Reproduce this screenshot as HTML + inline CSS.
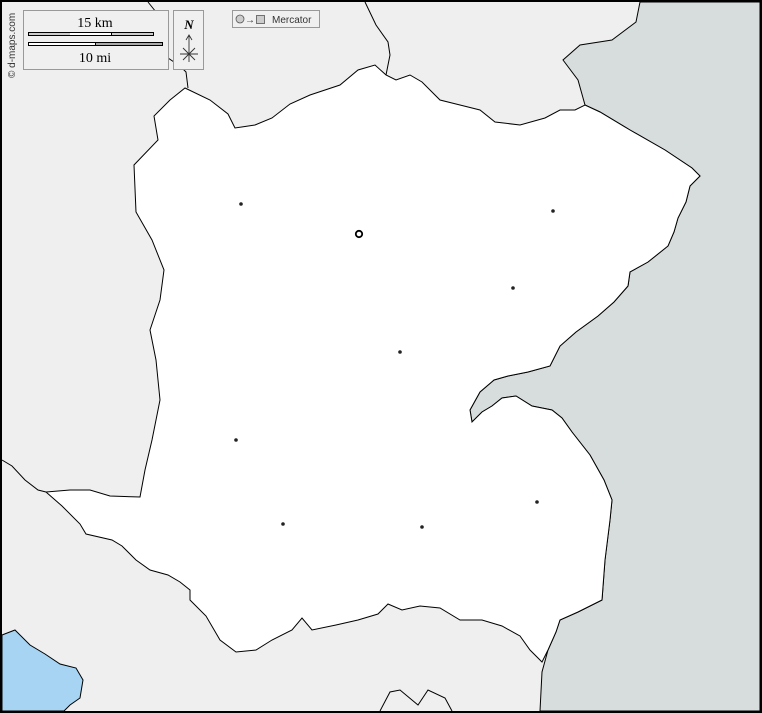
<!DOCTYPE html>
<html><head><meta charset="utf-8"><style>
html,body{margin:0;padding:0;background:#000}
svg{display:block}
</style></head><body>
<svg width="762" height="713" viewBox="0 0 762 713" xmlns="http://www.w3.org/2000/svg">
<rect x="0" y="0" width="762" height="713" fill="#000"/>
<rect x="2" y="2" width="758" height="709" fill="#efefef"/>
<path d="M640,2 L636,22 L612,40 L580,45 L563,60 L578,80 L585,105 L600,112 L630,130 L665,150 L692,168 L700,176 L690,186 L686,202 L678,218 L674,232 L668,246 L648,262 L630,272 L628,286 L614,302 L598,316 L576,332 L560,346 L550,366 L528,372 L508,376 L494,380 L480,392 L470,410 L472,422 L482,412 L492,406 L502,398 L516,396 L532,406 L552,410 L562,418 L572,432 L590,455 L604,480 L612,500 L610,520 L605,560 L602,600 L578,612 L560,620 L556,632 L548,650 L542,672 L540,711 L760,711 L760,2 Z" fill="#d6dddc" stroke="#000" stroke-width="1"/>
<path d="M185,88 L210,100 L228,114 L235,128 L255,125 L272,118 L290,104 L310,95 L340,85 L358,70 L375,65 L386,75 L396,80 L410,75 L422,82 L440,100 L460,105 L480,110 L495,122 L520,125 L545,118 L560,110 L575,110 L585,105 L600,112 L630,130 L665,150 L692,168 L700,176 L690,186 L686,202 L678,218 L674,232 L668,246 L648,262 L630,272 L628,286 L614,302 L598,316 L576,332 L560,346 L550,366 L528,372 L508,376 L494,380 L480,392 L470,410 L472,422 L482,412 L492,406 L502,398 L516,396 L532,406 L552,410 L562,418 L572,432 L590,455 L604,480 L612,500 L610,520 L605,560 L602,600 L578,612 L560,620 L556,632 L548,650 L542,662 L530,650 L520,636 L502,626 L482,620 L460,620 L440,608 L420,606 L402,610 L388,604 L378,614 L358,620 L336,625 L312,630 L302,618 L292,630 L272,640 L256,650 L236,652 L220,640 L206,616 L190,600 L190,590 L180,582 L168,575 L150,570 L136,560 L122,546 L112,540 L86,534 L80,524 L62,506 L46,492 L70,490 L90,490 L110,496 L140,497 L145,470 L152,440 L160,400 L156,360 L150,330 L160,300 L164,270 L152,240 L136,212 L134,165 L158,140 L154,116 L170,100 Z" fill="#fff" stroke="#000" stroke-width="1"/>
<path d="M2,635 L15,630 L30,645 L45,654 L60,664 L76,668 L83,680 L80,698 L70,705 L64,711 L2,711 Z" fill="#a6d4f2" stroke="#000" stroke-width="1"/>
<g fill="none" stroke="#000" stroke-width="1">
<path d="M2,460 L12,466 L25,480 L38,490 L46,492"/>
<path d="M365,2 L376,25 L388,42 L390,55 L386,75"/>
<path d="M148,2 L156,12 L162,20 L166,40 L168,58 L180,66 L186,72 L188,88"/>
<path d="M380,711 L390,692 L400,690 L418,705 L428,690 L445,698 L452,711"/>
</g>
<g fill="#222">
<circle cx="241" cy="204" r="1.8"/><circle cx="553" cy="211" r="1.8"/><circle cx="513" cy="288" r="1.8"/>
<circle cx="400" cy="352" r="1.8"/><circle cx="236" cy="440" r="1.8"/><circle cx="537" cy="502" r="1.8"/>
<circle cx="283" cy="524" r="1.8"/><circle cx="422" cy="527" r="1.8"/>
</g>
<circle cx="359" cy="234" r="3.2" fill="#fff" stroke="#000" stroke-width="1.8"/>
<rect x="23.5" y="10.5" width="145" height="59" fill="#f0f0f0" stroke="#999"/>
<text x="95" y="27" font-family="Liberation Serif" font-size="14" text-anchor="middle" fill="#000">15 km</text>
<rect x="28" y="32" width="126" height="4" fill="#000"/>
<rect x="29" y="33" width="41" height="2" fill="#ccc"/>
<rect x="70" y="33" width="41" height="2" fill="#fff"/>
<rect x="112" y="33" width="41" height="2" fill="#ccc"/>
<rect x="28" y="42" width="135" height="4" fill="#000"/>
<rect x="29" y="43" width="66" height="2" fill="#fff"/>
<rect x="96" y="43" width="66" height="2" fill="#aaa"/>
<text x="95" y="62" font-family="Liberation Serif" font-size="14" text-anchor="middle" fill="#000">10 mi</text>
<rect x="173.5" y="10.5" width="30" height="59" fill="#f0f0f0" stroke="#999"/>
<text x="189" y="29" font-family="Liberation Serif" font-style="italic" font-weight="bold" font-size="13" text-anchor="middle" fill="#000">N</text>
<path d="M189,36 L189,62 M186,40 L189,35 L192,40 M180,54 L198,54 M183,48 L195,60 M195,48 L183,60" stroke="#333" stroke-width="0.9" fill="none"/>
<rect x="232.5" y="10.5" width="87" height="17" fill="#f0f0f0" stroke="#999"/>
<circle cx="240" cy="19" r="4" fill="#ccc" stroke="#555" stroke-width="0.8"/>
<text x="245" y="23" font-family="Liberation Sans" font-size="10" fill="#333">→</text>
<rect x="256.5" y="15.5" width="8" height="8" fill="#ccc" stroke="#555" stroke-width="0.8"/>
<text x="272" y="23" font-family="Liberation Sans" font-size="10" fill="#333">Mercator</text>
<text transform="translate(15,78) rotate(-90)" font-family="Liberation Sans" font-size="10" fill="#333">© d-maps.com</text>
</svg>
</body></html>
